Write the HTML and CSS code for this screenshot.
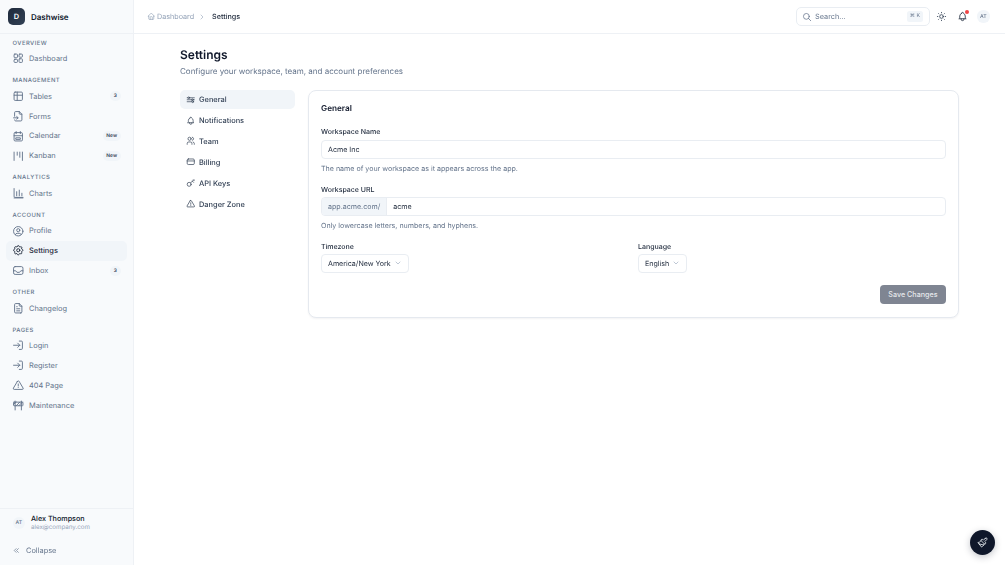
FILE: index.html
```html
<!DOCTYPE html>
<html lang="en">
<head>
<meta charset="utf-8">
<title>Settings</title>
<link rel="stylesheet" href="styles.css">
</head>
<body>
<div class="app">
  <aside class="sidebar">
    <div class="brand"><span class="logo">D</span><span class="brand-name">Dashwise</span></div>
    <nav class="nav">
      <div class="section first">
        <div class="section-label">OVERVIEW</div>
        <a class="item"><svg class="ic" viewBox="0 0 24 24"><rect x="4" y="4" width="6.500" height="7" rx="1.500"/><rect x="13.500" y="4" width="6.500" height="6" rx="1.500"/><rect x="4" y="14" width="6.500" height="6" rx="1.500"/><rect x="13.500" y="13" width="6.500" height="7" rx="1.500"/></svg><span>Dashboard</span></a>
      </div>
      <div class="section">
        <div class="section-label">MANAGEMENT</div>
        <a class="item"><svg class="ic" viewBox="0 0 24 24"><rect x="4" y="4" width="16" height="16" rx="2"/><path d="M4 10h16M10 4v16"/></svg><span>Tables</span><b class="badge">3</b></a>
        <a class="item"><svg class="ic" viewBox="0 0 24 24"><path d="M14 3v4a1 1 0 0 0 1 1h4"/><path d="M5 12V5a2 2 0 0 1 2-2h7l5 5v11a2 2 0 0 1-2 2H7a2 2 0 0 1-2-2"/><path d="M3 15h8M9 12.500l3 2.500-3 2.500"/></svg><span>Forms</span></a>
        <a class="item"><svg class="ic" viewBox="0 0 24 24"><rect x="4" y="5" width="16" height="16" rx="2"/><path d="M16 3v4M8 3v4M4 11h16M8 15h8v3H8z"/></svg><span>Calendar</span><b class="badge">New</b></a>
        <a class="item"><svg class="ic" viewBox="0 0 24 24"><path d="M4 4v16M20 4v16M10 4v6M15 4v10"/></svg><span>Kanban</span><b class="badge">New</b></a>
      </div>
      <div class="section">
        <div class="section-label">ANALYTICS</div>
        <a class="item"><svg class="ic" viewBox="0 0 24 24"><path d="M4 3v15a2 2 0 0 0 2 2h15"/><path d="M9 17V9M14 17V6M19 17v-5M4 21h17"/></svg><span>Charts</span></a>
      </div>
      <div class="section">
        <div class="section-label">ACCOUNT</div>
        <a class="item"><svg class="ic" viewBox="0 0 24 24"><circle cx="12" cy="12" r="9"/><circle cx="12" cy="10" r="3"/><path d="M6.200 18.500A4 4 0 0 1 10 16h4a4 4 0 0 1 3.800 2.500"/></svg><span>Profile</span></a>
        <a class="item active"><svg class="ic" viewBox="0 0 24 24"><path d="M10.300 4.300c.4-1.800 3-1.800 3.400 0a1.700 1.700 0 0 0 2.600 1.100c1.500-.9 3.300.8 2.400 2.400a1.700 1.700 0 0 0 1 2.500c1.800.4 1.800 3 0 3.400a1.700 1.700 0 0 0-1 2.600c.9 1.500-.9 3.300-2.400 2.400a1.700 1.700 0 0 0-2.600 1c-.4 1.800-3 1.800-3.400 0a1.700 1.700 0 0 0-2.600-1c-1.500.9-3.300-.9-2.400-2.400a1.700 1.700 0 0 0-1-2.600c-1.800-.4-1.800-3 0-3.400a1.700 1.700 0 0 0 1-2.500c-.9-1.600.9-3.300 2.400-2.400 1 .6 2.300.1 2.600-1.100"/><circle cx="12" cy="12" r="3"/></svg><span>Settings</span></a>
        <a class="item"><svg class="ic" viewBox="0 0 24 24"><rect x="3" y="5" width="18" height="15" rx="3"/><path d="M3 13h4l2.500 3h5l2.500-3h4"/></svg><span>Inbox</span><b class="badge">3</b></a>
      </div>
      <div class="section">
        <div class="section-label">OTHER</div>
        <a class="item"><svg class="ic" viewBox="0 0 24 24"><path d="M14 3v4a1 1 0 0 0 1 1h4"/><path d="M17 21H7a2 2 0 0 1-2-2V5a2 2 0 0 1 2-2h7l5 5v11a2 2 0 0 1-2 2z"/><path d="M9 9h1M9 13h6M9 17h6"/></svg><span>Changelog</span></a>
      </div>
      <div class="section">
        <div class="section-label">PAGES</div>
        <a class="item"><svg class="ic" viewBox="0 0 24 24"><path d="M14 4h4a2 2 0 0 1 2 2v12a2 2 0 0 1-2 2h-4"/><path d="M3 12h12M11 8l4 4-4 4"/></svg><span>Login</span></a>
        <a class="item"><svg class="ic" viewBox="0 0 24 24"><path d="M14 4h4a2 2 0 0 1 2 2v12a2 2 0 0 1-2 2h-4"/><path d="M3 12h12M11 8l4 4-4 4"/></svg><span>Register</span></a>
        <a class="item"><svg class="ic" viewBox="0 0 24 24"><path d="M10.400 4.500 2.700 17.500A1.800 1.800 0 0 0 4.300 20h15.400a1.800 1.800 0 0 0 1.600-2.500L13.600 4.500a1.800 1.800 0 0 0-3.200 0z"/><path d="M12 9.500v4M12 16.500v.01"/></svg><span>404 Page</span></a>
        <a class="item"><svg class="ic" viewBox="0 0 24 24"><rect x="3" y="6" width="18" height="7" rx="1"/><path d="M6 21V4M18 21V4M3 10l5-4M8 13l7-7M13 13l7-7"/></svg><span>Maintenance</span></a>
      </div>
    </nav>
    <div class="user">
      <span class="avatar">AT</span>
      <div class="user-info"><div class="user-name">Alex Thompson</div><div class="user-mail">alex@company.com</div></div>
    </div>
    <a class="collapse"><svg class="ic-sm" viewBox="0 0 24 24"><path d="M11 7l-5 5 5 5M17 7l-5 5 5 5"/></svg><span>Collapse</span></a>
  </aside>
  <div class="main">
    <header class="topbar">
      <div class="crumbs">
        <svg class="ic crumb-home" viewBox="0 0 24 24"><path d="M5 12H3l9-9 9 9h-2"/><path d="M5 12v7a2 2 0 0 0 2 2h10a2 2 0 0 0 2-2v-7"/><path d="M9 21v-6a2 2 0 0 1 2-2h2a2 2 0 0 1 2 2v6"/></svg>
        <span class="crumb">Dashboard</span>
        <svg class="crumb-sep" viewBox="0 0 24 24"><path d="M9 6l6 6-6 6"/></svg>
        <span class="crumb-now">Settings</span>
      </div>
      <div class="top-actions">
        <div class="search">
          <svg class="ic search-ic" viewBox="0 0 24 24"><circle cx="10.500" cy="10.500" r="7"/><path d="M21 21l-5.500-5.500"/></svg>
          <span class="search-text">Search...</span>
          <kbd class="kbd">⌘ K</kbd>
        </div>
        <svg class="ic sun" viewBox="0 0 24 24"><circle cx="12" cy="12" r="4"/><path d="M3 12h1M20 12h1M12 3v1M12 20v1M5.600 5.600l.7.700M17.700 17.700l.7.700M5.600 18.400l.7-.7M17.700 6.300l.7-.7"/></svg>
        <div class="bell-wrap">
          <svg class="ic bell" viewBox="0 0 24 24"><path d="M10 5a2 2 0 1 1 4 0 7 7 0 0 1 4 6v3a4 4 0 0 0 2 3H4a4 4 0 0 0 2-3v-3a7 7 0 0 1 4-6"/><path d="M9 17v1a3 3 0 0 0 6 0v-1"/></svg>
          <span class="dot"></span>
        </div>
        <span class="avatar">AT</span>
      </div>
    </header>
    <main class="content">
      <h1 class="title">Settings</h1>
      <p class="subtitle">Configure your workspace, team, and account preferences</p>
      <div class="columns">
        <div class="tabs">
          <a class="tab active"><svg class="ic" viewBox="0 0 24 24"><circle cx="7" cy="7" r="2.200"/><path d="M3 7h1.800M9.500 7H21"/><circle cx="16" cy="12" r="2.200"/><path d="M3 12h10.500M18.500 12H21"/><path d="M3 17h11"/><circle cx="17" cy="17" r="2.200"/></svg><span>General</span></a>
          <a class="tab"><svg class="ic" viewBox="0 0 24 24"><path d="M10 5a2 2 0 1 1 4 0 7 7 0 0 1 4 6v3a4 4 0 0 0 2 3H4a4 4 0 0 0 2-3v-3a7 7 0 0 1 4-6"/><path d="M9 17v1a3 3 0 0 0 6 0v-1"/></svg><span>Notifications</span></a>
          <a class="tab"><svg class="ic" viewBox="0 0 24 24"><circle cx="9" cy="7" r="4"/><path d="M3 21v-2a4 4 0 0 1 4-4h4a4 4 0 0 1 4 4v2M16 3.100a4 4 0 0 1 0 7.800M21 21v-2a4 4 0 0 0-3-3.800"/></svg><span>Team</span></a>
          <a class="tab"><svg class="ic" viewBox="0 0 24 24"><rect x="3" y="5" width="18" height="14" rx="3"/><path d="M3 10h18"/></svg><span>Billing</span></a>
          <a class="tab"><svg class="ic" viewBox="0 0 24 24"><circle cx="8" cy="16" r="5"/><path d="M12 12l8-8M16 8l3 3M19 5l2 2"/></svg><span>API Keys</span></a>
          <a class="tab"><svg class="ic" viewBox="0 0 24 24"><path d="M10.400 4.500 2.700 17.500A1.800 1.800 0 0 0 4.300 20h15.400a1.800 1.800 0 0 0 1.600-2.500L13.600 4.500a1.800 1.800 0 0 0-3.200 0z"/><path d="M12 9.500v4M12 16.500v.01"/></svg><span>Danger Zone</span></a>
        </div>
        <section class="card">
          <h2 class="card-title">General</h2>
          <div class="field">
            <label class="label">Workspace Name</label>
            <div class="input">Acme Inc</div>
            <p class="hint">The name of your workspace as it appears across the app.</p>
          </div>
          <div class="field">
            <label class="label">Workspace URL</label>
            <div class="input-group"><span class="prefix">app.acme.com/</span><span class="suffix">acme</span></div>
            <p class="hint">Only lowercase letters, numbers, and hyphens.</p>
          </div>
          <div class="row">
            <div class="col">
              <label class="label">Timezone</label>
              <div class="select"><span>America/New York</span><svg class="chev" viewBox="0 0 24 24"><path d="M6 9l6 6 6-6"/></svg></div>
            </div>
            <div class="col">
              <label class="label">Language</label>
              <div class="select"><span>English</span><svg class="chev" viewBox="0 0 24 24"><path d="M6 9l6 6 6-6"/></svg></div>
            </div>
          </div>
          <div class="actions"><button class="save">Save Changes</button></div>
        </section>
      </div>
    </main>
  </div>
</div>
<button class="fab"><svg viewBox="0 0 24 24"><path d="M18.370 2.630 14 7l-1.590-1.590a2 2 0 0 0-2.820 0L8 7l9 9 1.590-1.590a2 2 0 0 0 0-2.820L17 10l4.370-4.370a2.120 2.120 0 1 0-3-3Z"/><path d="M9 8c-2 3-4 3.500-7 4l8 10c2-1 6-5 6-7"/><path d="M14.500 17.500 4.500 15"/></svg></button>
</body>
</html>
```
FILE: styles.css
```css
* { box-sizing: border-box; margin: 0; padding: 0; }
html, body { height: 100%; overflow: hidden; }
body { font-family: Inter, "Liberation Sans", sans-serif; background: #fff; color: #0f172a; text-rendering: geometricPrecision; }
svg { fill: none; stroke: currentColor; stroke-linecap: round; stroke-linejoin: round; stroke-width: 1.8; flex: none; }
.app { display: flex; height: 565px; will-change: opacity; }

.sidebar { width: 134px; flex: none; display: flex; flex-direction: column; background: #f8fafc; border-right: 1px solid #eef1f5; }
.brand { height: 34px; flex: none; display: flex; align-items: center; gap: 6px; padding: 0 8px; border-bottom: 1px solid #eef1f5; }
.logo { width: 17px; height: 17px; border-radius: 5px; background: linear-gradient(135deg, #1e293b, #334155); color: #fff; font-size: 7.400px; font-weight: 600; display: flex; align-items: center; justify-content: center; }
.brand-name { font-size: 8px; font-weight: 600; color: #0f172a; }
.nav { flex: 1; padding: 3.800px 6px 0; }
.section { margin-top: 6.700px; }
.section.first { margin-top: 0; }
.section-label { height: 11px; padding-left: 6.500px; font-size: 5.900px; line-height: 11px; font-weight: 500; letter-spacing: .45px; color: #64748b; }
.item { height: 19.850px; display: flex; align-items: center; gap: 5px; padding: 0 6.500px 0 5.500px; font-size: 7.430px; color: #64748b; border-radius: 5px; }
.item .ic { width: 12.500px; height: 12.500px; color: #64748b; }
.item.active { background: #f1f5f9; color: #1e293b; font-weight: 500; }
.item.active .ic { color: #1e293b; }
.item span { flex: 1; }
.badge { height: 10px; min-width: 10.500px; display: flex; align-items: center; justify-content: center; padding: 0 3.500px; font-size: 4.900px; font-weight: 600; color: #334155; background: #f1f5f9; border-radius: 5px; }
.user { height: 30px; flex: none; display: flex; align-items: center; gap: 6px; padding: 0 12.500px 1px; border-top: 1px solid #eef1f5; margin-bottom: 4px; }
.avatar { width: 12.500px; height: 12.500px; border-radius: 50%; background: #f1f5f9; color: #64748b; font-size: 5.200px; font-weight: 500; display: flex; align-items: center; justify-content: center; flex: none; }
.user-name { font-size: 7.200px; font-weight: 500; color: #0f172a; line-height: 9.500px; }
.user-mail { margin-top: 1px; font-size: 6.200px; color: #94a3b8; line-height: 8.500px; }
.collapse { height: 17px; flex: none; margin-bottom: 6px; display: flex; align-items: center; gap: 5px; padding-left: 12px; font-size: 7.430px; color: #64748b; }
.ic-sm { width: 9px; height: 9px; color: #64748b; }

.main { flex: 1; min-width: 0; display: flex; flex-direction: column; }
.topbar { height: 34px; flex: none; display: flex; align-items: center; justify-content: space-between; padding: 0 15.500px 0 12.500px; border-bottom: 1px solid #eef1f5; }
.crumbs { display: flex; align-items: center; font-size: 7.200px; }
.crumb-home { width: 8.500px; height: 8.500px; color: #94a3b8; margin-right: 2px; }
.crumb { color: #94a3b8; }
.crumb-sep { width: 8px; height: 8px; color: #94a3b8; margin: 0 6.500px 0 3.500px; }
.crumb-now { color: #1e293b; font-weight: 500; }
.top-actions { display: flex; align-items: center; }
.search { width: 134px; height: 19px; display: flex; align-items: center; gap: 3.100px; padding: 0 6px 0 5px; border: 1px solid #e9edf2; border-radius: 5px; background: #fff; }
.search-ic { width: 10px; height: 10px; color: #64748b; }
.search-text { flex: 1; font-size: 7.300px; color: #64748b; }
.kbd { font-family: Inter, "DejaVu Sans", sans-serif; font-size: 5.200px; color: #64748b; background: #f1f5f9; border-radius: 2.500px; padding: 1.500px 3px; line-height: 7.500px; }
.sun { width: 11px; height: 11px; margin-left: 5.500px; color: #334155; }
.bell-wrap { position: relative; display: flex; margin-left: 10.500px; }
.bell { width: 11px; height: 11px; color: #1e293b; }
.dot { position: absolute; top: -1px; right: -1px; width: 4px; height: 4px; border-radius: 50%; background: #ef4444; }
.top-actions .avatar { margin-left: 9px; }

.content { padding: 13px 46px 0; }
.title { font-size: 12px; line-height: 15px; font-weight: 600; color: #0f172a; }
.subtitle { margin-top: 4px; font-size: 8px; line-height: 11px; color: #64748b; }
.columns { display: flex; align-items: flex-start; gap: 13px; margin-top: 13px; }
.tabs { width: 115px; flex: none; display: flex; flex-direction: column; gap: 2.250px; }
.tab { height: 18.700px; display: flex; align-items: center; gap: 3.750px; padding: 0 5.750px; font-size: 7.430px; font-weight: 500; color: #334155; border-radius: 5px; }
.tab .ic { width: 9.500px; height: 9.500px; color: #334155; }
.tab.active { background: #f1f5f9; }
.card { flex: 1; height: 228px; padding: 11.500px 12px 11px; border: 1px solid #e5e9ef; border-radius: 8px; background: #fff; box-shadow: 0 1px 2px rgba(15,23,42,.05); }
.card-title { font-size: 8.200px; line-height: 11px; font-weight: 600; color: #0f172a; margin-bottom: 13.500px; }
.field { margin-bottom: 11px; }
.label { display: block; font-size: 7px; line-height: 10px; font-weight: 500; color: #1e293b; margin-bottom: 2px; }
.field:first-of-type .label { margin-bottom: 2.500px; }
.input, .input-group { height: 19px; border: 1px solid #e9edf2; border-radius: 4px; background: #fff; font-size: 7.100px; color: #1e293b; }
.input { display: flex; align-items: center; padding: 0 6px; }
.input-group { display: flex; overflow: hidden; }
.prefix { display: flex; align-items: center; padding: 0 6px; background: #f1f5f9; color: #64748b; border-right: 1px solid #e9edf2; }
.suffix { display: flex; align-items: center; padding: 0 6px; }
.hint { margin-top: 5px; font-size: 7.100px; line-height: 10px; color: #64748b; }
.row { display: grid; grid-template-columns: 1fr 1fr; gap: 9px; margin-top: 2.250px; }
.select { display: flex; width: fit-content; align-items: center; gap: 3px; height: 19px; padding: 0 6px; border: 1px solid #e9edf2; border-radius: 4px; background: #fff; font-size: 7.100px; color: #1e293b; }
.chev { width: 8px; height: 8px; color: #94a3b8; }
.actions { display: flex; justify-content: flex-end; margin-top: 12.500px; }
.save { width: 66px; height: 19px; border: 0; border-radius: 4px; background: #7f8592; color: #e6e8ec; font-family: inherit; font-size: 7.200px; font-weight: 500; }
.fab { position: fixed; right: 10.500px; bottom: 10.500px; width: 25px; height: 25px; border: 0; border-radius: 50%; background: #0f172a; color: #f1f5f9; display: flex; align-items: center; justify-content: center; box-shadow: 0 2px 7px rgba(15,23,42,.25); }
.fab svg { width: 11px; height: 11px; }
```
